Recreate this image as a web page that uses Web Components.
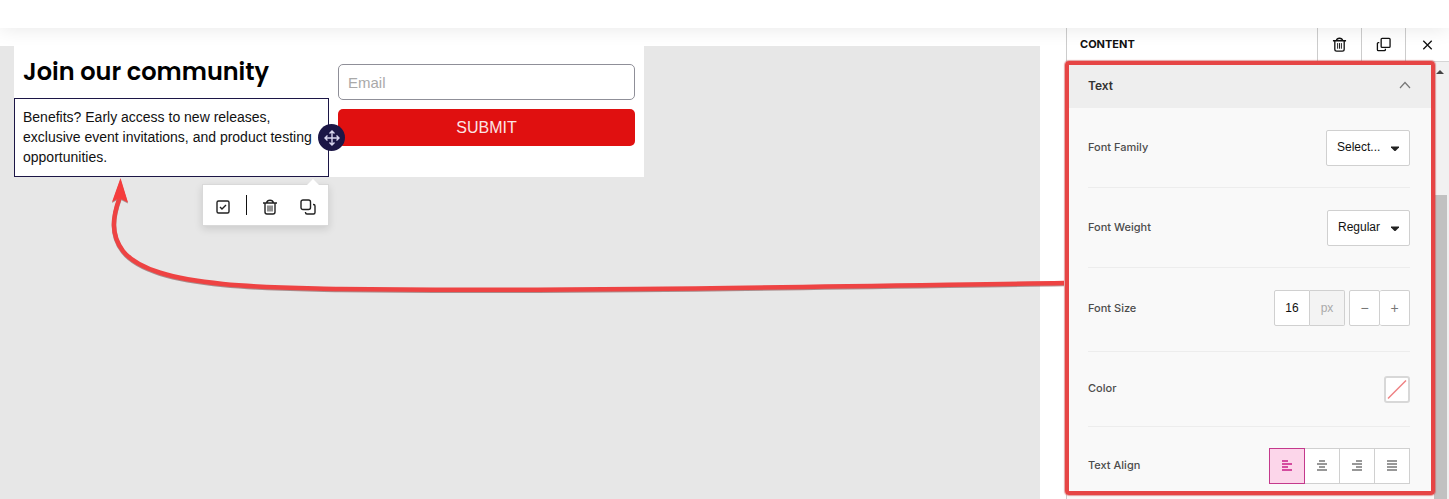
<!DOCTYPE html>
<html lang="en">
<head>
<meta charset="utf-8">
<title>Form editor</title>
<style>
    html, body {
        height: 100%;
        margin: 0;
    }

    body {
        font-family: "Liberation Sans", Arial, sans-serif;
        color: #111;
        background: #fff;
        overflow: hidden;
    }
</style>
</head>
<body>
<editor-app></editor-app>

<script>
const ICONS = {
    trash: `<path d="M1 4h14M4.500 4C5 2 6 1.300 8 1.300S11 2 11.500 4M3 4v9a2 2 0 0 0 2 2h6a2 2 0 0 0 2-2V4"/><path d="M6 6.500v6M8 6.500v6M10 6.500v6" stroke-width="1"/>`,
    copy: `<rect x="1" y="1" width="9.500" height="9.500" rx="2"/><path d="M13 5.500h.500a1.500 1.500 0 0 1 1.500 1.500v6.500a1.500 1.500 0 0 1-1.500 1.500H7A1.500 1.500 0 0 1 5.500 13.500V13"/>`,
    duplicate: `<rect x="5.500" y="1.500" width="9.500" height="9.500" rx="1"/><path d="M3.500 6H2.500a1 1 0 0 0-1 1v6.500a1 1 0 0 0 1 1H9a1 1 0 0 0 1-1v-1"/>`,
    close: `<path d="M3.500 4l9 9M12.500 4l-9 9"/>`,
    check: `<rect x="2" y="2" width="12" height="12" rx="1.500"/><path d="M5 8l2 2 4-4"/>`,
    move: `<path d="M8 1v14M1 8h14M5.500 3.500L8 1l2.500 2.500M5.500 12.500L8 15l2.500-2.500M3.500 5.500L1 8l2.500 2.500M12.500 5.500L15 8l-2.500 2.500"/>`,
    chevron: `<path d="M3 11l5-5.500 5 5.500"/>`,
    left: `<path d="M3 3h6M3 6h10M3 9h6M3 12h10"/>`,
    center: `<path d="M5 3h6M3 6h10M5 9h6M3 12h10"/>`,
    right: `<path d="M7 3h6M3 6h10M7 9h6M3 12h10"/>`,
    justify: `<path d="M3 3h10M3 6h10M3 9h10M3 12h10"/>`,
    caret: `<path d="M4 6.500h8v1L8.500 11h-1L4 7.500z" fill="currentColor" stroke="none"/>`
}

class UiIcon extends HTMLElement {
    constructor(){
        super()

        const name = this.getAttribute("name")

        this.attachShadow({mode:"open"})
        this.shadowRoot.innerHTML = `
        <style>
        :host {
            display: block;
            width: 16px;
            height: 16px;
        }

        svg {
            display: block;
            width: 100%;
            height: 100%;
            fill: none;
            stroke: currentColor;
            stroke-width: var(--stroke, 1.4);
        }
        </style>
        <svg viewBox="0 0 16 16" aria-hidden="true">${ICONS[name]}</svg>`
    }
}

class SignupForm extends HTMLElement {
    constructor(){
        super()

        this.attachShadow({mode:"open"})
        this.shadowRoot.innerHTML = `
        <style>
        :host {
            display: grid;
            grid-template-columns: 1fr 1fr;
            max-width: 630px;
            background: #fff;
        }

        form {
            display: flex;
            flex-direction: column;
            gap: 9px;
            padding: 18px 9px 30px;
        }

        input, button {
            box-sizing: border-box;
            width: 100%;
            margin: 0;
            border-radius: 5px;
            font-family: inherit;
        }

        input {
            height: 36px;
            padding: 0 9px;
            border: 1px solid #8f8f98;
            background: #fff;
            font-size: 15px;
        }

        input::placeholder {
            color: #a9a9a9;
        }

        button {
            height: 37px;
            border: 0;
            background: #e01010;
            color: #fbe4e4;
            font-size: 16px;
        }
        </style>
        <div><slot></slot></div>
        <form>
            <input type="email" aria-label="Email" placeholder="Email">
            <button type="button">SUBMIT</button>
        </form>`
    }
}

class TextBlock extends HTMLElement {
    constructor(){
        super()

        this.attachShadow({mode:"open"})
        this.shadowRoot.innerHTML = `
        <style>
        :host {
            display: block;
            position: relative;
            border: 1px solid #1c1646;
            background: #fff;
        }

        p {
            margin: 0;
            padding: 8px 0 9px 8px;
            font-size: 14px;
            line-height: 20px;
        }

        button {
            padding: 0;
            border: 0;
            background: none;
            color: inherit;
        }

        .handle {
            position: absolute;
            right: -17px;
            top: 25px;
            display: grid;
            place-items: center;
            width: 27px;
            height: 27px;
            border-radius: 50%;
            background: #1c1646;
            color: #d8d5ee;
            z-index: 1;
        }

        .tools {
            position: absolute;
            right: -1px;
            top: 100%;
            margin-top: 8px;
            display: flex;
            align-items: center;
            box-sizing: border-box;
            height: 42px;
            padding: 3px 12px 0;
            gap: 15px;
            border: 1px solid #d9d9d9;
            background: #fff;
            color: #222;
            box-shadow: 0 3px 8px rgba(0, 0, 0, .12);
        }

        .tools::before {
            content: "";
            position: absolute;
            right: 9px;
            top: -6px;
            border: 6px solid transparent;
            border-top: 0;
            border-bottom-color: #fff;
        }

        .tools i {
            width: 1px;
            height: 20px;
            margin-bottom: 4px;
            background: #111;
        }

        .tools .last {
            margin-left: 7px;
        }
        </style>
        <p><slot></slot></p>
        <button class="handle" aria-label="Move"><ui-icon name="move"></ui-icon></button>
        <div class="tools">
            <button aria-label="Select"><ui-icon name="check"></ui-icon></button>
            <i></i>
            <button aria-label="Delete"><ui-icon name="trash"></ui-icon></button>
            <button class="last" aria-label="Duplicate"><ui-icon name="copy"></ui-icon></button>
        </div>`
    }
}

// Shared row: label on the left, control on the right
class FieldRow extends HTMLElement {
    constructor(){
        super()

        this.attachShadow({mode:"open"})
        this.shadowRoot.innerHTML = `
        <style>
        :host {
            display: flex;
            align-items: center;
            justify-content: space-between;
            box-sizing: border-box;
            min-height: 80px;
            border-bottom: 1px solid #ededed;
            color: #4c4c4c;
            font: 500 11px/16px Inter, sans-serif;
        }

        :host([tall]) {
            min-height: 84px;
            padding-bottom: 3px;
        }

        :host([short]) {
            min-height: 75px;
        }

        :host(:last-child) {
            min-height: 78px;
            border-bottom: 0;
        }

        .label {
            padding-bottom: 2px;
        }

        .group {
            display: flex;
        }

        button, input, select {
            box-sizing: border-box;
            height: 36px;
            margin: 0;
            padding: 0;
            border: 1px solid #d0d0d0;
            border-radius: 2px;
            background: #fff;
            color: #111;
            font: 12px "Liberation Sans", Arial, sans-serif;
        }
        ${this.css()}
        </style>
        ${this.control(this.getAttribute("label"))}`
    }
}

class SelectField extends FieldRow {
    css(){
        return `
        .select {
            position: relative;
        }

        select {
            appearance: none;
            padding: 0 28px 2px 10px;
        }

        ui-icon {
            position: absolute;
            right: 7px;
            top: 10px;
            color: #222;
            pointer-events: none;
        }`
    }

    control(label){
        return `
        <label class="label" for="control">${label}</label>
        <div class="select">
            <select id="control"><option>${this.getAttribute("value")}</option></select>
            <ui-icon name="caret"></ui-icon>
        </div>`
    }
}

class SizeField extends FieldRow {
    css(){
        return `
        .group {
            align-items: center;
        }

        input {
            width: 36px;
            text-align: center;
            border-radius: 2px 0 0 2px;
        }

        .unit {
            box-sizing: border-box;
            width: 35px;
            height: 36px;
            border: 1px solid #d0d0d0;
            border-left: 0;
            border-radius: 0 2px 2px 0;
            background: #f3f3f3;
            color: #aaa;
            font: 12px/34px "Liberation Sans", Arial, sans-serif;
            text-align: center;
        }

        button {
            width: 31px;
            margin-left: 4px;
            color: #777;
            font-size: 14px;
        }

        button + button {
            width: 30px;
            margin-left: 0;
            border-left: 0;
        }`
    }

    control(label){
        return `
        <label for="control">${label}</label>
        <div class="group">
            <input id="control" type="text" inputmode="numeric" value="16">
            <span class="unit">px</span>
            <button aria-label="Decrease">−</button>
            <button aria-label="Increase">+</button>
        </div>`
    }
}

class ColorField extends FieldRow {
    css(){
        return `
        button {
            width: 26px;
            height: 27px;
            border: 2px solid #d8d8d8;
            border-radius: 3px;
        }

        svg {
            display: block;
            width: 100%;
            height: 100%;
            stroke: #ee7f82;
            stroke-width: 1.500;
        }`
    }

    control(label){
        return `
        <label class="label" for="control">${label}</label>
        <button id="control">
            <svg viewBox="0 0 22 23" aria-hidden="true"><path d="M2 20.500L20 2.500"/></svg>
        </button>`
    }
}

class AlignField extends FieldRow {
    css(){
        return `
        button {
            display: grid;
            place-items: center;
            width: 36px;
            margin-left: -1px;
            border-radius: 0;
            color: #777;
        }

        button[aria-pressed="true"] {
            border-color: #c4398c;
            background: #fcd6ea;
            color: #c81e87;
            z-index: 1;
        }

        ui-icon {
            --stroke: 1.500;
        }`
    }

    control(label){
        const buttons = ["left", "center", "right", "justify"].map(name => `
            <button aria-label="${name}" aria-pressed="${name === "left"}"><ui-icon name="${name}"></ui-icon></button>`)

        return `
        <span class="label" id="label">${label}</span>
        <div class="group" role="group" aria-labelledby="label">${buttons.join("")}</div>`
    }
}

class SidePanel extends HTMLElement {
    constructor(){
        super()

        this.attachShadow({mode:"open"})
        this.shadowRoot.innerHTML = `
        <style>
        :host {
            display: flex;
            flex-direction: column;
            box-sizing: border-box;
            border-left: 1px solid #ccc;
            font-family: Inter, sans-serif;
        }

        button {
            padding: 0;
            border: 0;
            background: none;
            color: #111;
        }

        header {
            display: flex;
            height: 34px;
            border-bottom: 1px solid #d5d5d5;
            box-sizing: border-box;
        }

        h2 {
            flex: 1;
            margin: 0;
            padding-left: 13px;
            font-size: 11px;
            font-weight: 700;
            line-height: 33px;
        }

        header button {
            display: grid;
            place-items: center;
            box-sizing: border-box;
            width: 44px;
            border-left: 1px solid #ccc;
        }

        header ui-icon {
            width: 15px;
            height: 15px;
        }

        .body {
            display: flex;
            flex: 1;
            min-height: 0;
            position: relative;
        }

        section {
            flex: 1;
            background: #f9f9f9;
        }

        .title {
            display: flex;
            align-items: center;
            justify-content: space-between;
            width: 100%;
            height: 46px;
            padding: 0 21px;
            background: #eee;
            font: 600 12px Inter, sans-serif;
            color: #333;
        }

        .title ui-icon {
            color: #777;
            --stroke: 1.200;
        }

        .fields {
            padding: 0 24px 0 21px;
        }

        .scroll {
            display: flex;
            flex-direction: column;
            width: 15px;
            padding-top: 8px;
            box-sizing: border-box;
            background: #f1f1f1;
        }

        .scroll::before {
            content: "";
            margin-left: 2px;
            width: 0;
            border: 4px solid transparent;
            border-top: 0;
            border-bottom: 4px solid #444;
        }

        .thumb {
            flex: 1;
            width: 13px;
            margin-top: 121px;
            background: #c1c1c1;
        }

        .highlight {
            position: absolute;
            left: -2px;
            right: 14px;
            top: -1px;
            bottom: 4px;
            box-sizing: border-box;
            border: 4px solid #e64545;
            border-radius: 4px;
            box-shadow: 0 0 1px 1px rgba(200, 70, 70, .5);
            pointer-events: none;
        }
        </style>
        <header>
            <h2>CONTENT</h2>
            <button aria-label="Delete"><ui-icon name="trash"></ui-icon></button>
            <button aria-label="Duplicate"><ui-icon name="duplicate"></ui-icon></button>
            <button aria-label="Close"><ui-icon name="close"></ui-icon></button>
        </header>
        <div class="body">
            <section>
                <button class="title" aria-expanded="true">Text <ui-icon name="chevron"></ui-icon></button>
                <div class="fields"><slot></slot></div>
            </section>
            <div class="scroll"><div class="thumb"></div></div>
            <div class="highlight"></div>
        </div>`
    }
}

class PointerArrow extends HTMLElement {
    constructor(){
        super()

        this.attachShadow({mode:"open"})
        this.shadowRoot.innerHTML = `
        <style>
        :host {
            display: block;
            pointer-events: none;
        }

        svg {
            display: block;
            overflow: visible;
            filter: drop-shadow(0 1px 0 rgba(110, 50, 50, .5));
        }
        </style>
        <svg width="960" height="120" viewBox="0 0 960 120" aria-hidden="true">
            <path d="M15.500 20C9 38 6 56 19 73C34 92 70 101 119 106C160 110 200 110 236 111C450 114 750 108 960 105" fill="none" stroke="#ee4343" stroke-width="4.500"/>
            <path d="M16.500 0L24 24.500L15 20L8 24z" fill="#f53d3d"/>
        </svg>`
    }
}

class EditorApp extends HTMLElement {
    constructor(){
        super()

        this.attachShadow({mode:"open"})
        this.shadowRoot.innerHTML = `
        <style>
        :host {
            display: flex;
            flex-direction: column;
            height: 100%;
        }

        .topbar {
            height: 28px;
            background: #fff;
            box-shadow: 0 0 20px rgba(0, 0, 0, .1);
            z-index: 2;
        }

        main {
            display: flex;
            flex: 1;
            min-height: 0;
        }

        .canvas {
            position: relative;
            flex: 1;
            padding: 18px 26px 0 0;
            display: flex;
        }

        .stage {
            flex: 1;
            padding-left: 14px;
            background: #e7e7e7;
        }

        h1 {
            margin: 0;
            padding-left: 9px;
            font: 600 24px/52px Poppins, Inter, sans-serif;
            white-space: nowrap;
            color: #000;
        }

        pointer-arrow {
            position: absolute;
            left: 104px;
            top: 150px;
        }

        side-panel {
            width: 383px;
        }
        </style>
        <div class="topbar"></div>
        <main>
            <div class="canvas">
                <div class="stage">
                    <signup-form>
                        <h1>Join our community</h1>
                        <text-block>Benefits? Early access to new releases, exclusive event invitations, and product testing opportunities.</text-block>
                    </signup-form>
                </div>
                <pointer-arrow></pointer-arrow>
            </div>
            <side-panel>
                <select-field label="Font Family" value="Select..."></select-field>
                <select-field label="Font Weight" value="Regular"></select-field>
                <size-field label="Font Size" tall></size-field>
                <color-field label="Color" short></color-field>
                <align-field label="Text Align"></align-field>
            </side-panel>
        </main>`
    }
}

customElements.define("ui-icon", UiIcon)
customElements.define("signup-form", SignupForm)
customElements.define("text-block", TextBlock)
customElements.define("select-field", SelectField)
customElements.define("size-field", SizeField)
customElements.define("color-field", ColorField)
customElements.define("align-field", AlignField)
customElements.define("side-panel", SidePanel)
customElements.define("pointer-arrow", PointerArrow)
customElements.define("editor-app", EditorApp)
</script>
</body>
</html>
